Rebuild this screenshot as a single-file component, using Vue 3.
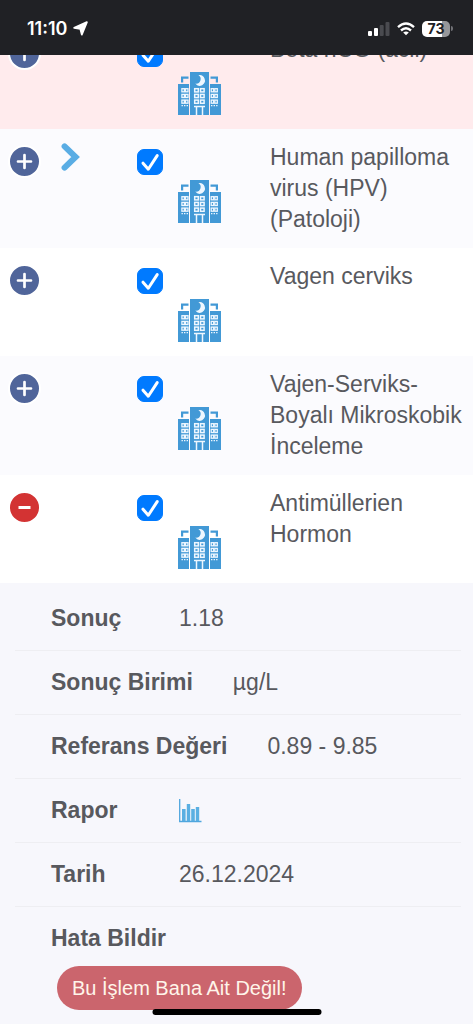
<script setup>
import { ref } from 'vue'

const tests = ref([
  { name: 'Beta hCG (acil)', tone: 'alert', open: false, arrow: false, picked: true },
  { name: 'Human papilloma virus (HPV) (Patoloji)', tone: 'tint', open: false, arrow: true, picked: true },
  { name: 'Vagen cerviks', tone: 'plain', open: false, arrow: false, picked: true },
  { name: 'Vajen-Serviks-Boyalı Mikroskobik İnceleme', tone: 'tint', open: false, arrow: false, picked: true },
  {
    name: 'Antimüllerien Hormon', tone: 'plain', open: true, arrow: false, picked: true,
    details: [
      { label: 'Sonuç', value: '1.18' },
      { label: 'Sonuç Birimi', value: 'µg/L' },
      { label: 'Referans Değeri', value: '0.89 - 9.85' },
      { label: 'Rapor', kind: 'report' },
      { label: 'Tarih', value: '26.12.2024' },
      { label: 'Hata Bildir', kind: 'dispute' },
    ],
  },
])

const centerWindows = [16, 21.7, 27.4].flatMap(y => [16, 21.8].map(x => ({ x, y })))
const sideWindows = [16, 21.7, 27.4].flatMap(y => [3.3, 6.9, 32.6, 36.2].map(x => ({ x, y })))
</script>

<template>
  <div class="page">
    <header class="status">
      <div class="clock">
        <span>11:10</span>
        <svg width="15" height="15" viewBox="0 0 15 15" aria-hidden="true">
          <path d="M13.9 1.1 8.8 13.6 7.3 7.8 1.2 6.9Z" fill="#fff" stroke="#fff" stroke-width="1.8" stroke-linejoin="round" />
        </svg>
      </div>
      <div class="signals">
        <svg width="22" height="14" viewBox="0 0 22 14" aria-hidden="true">
          <rect x="0" y="9" width="4" height="5" rx="1" fill="#fff" />
          <rect x="6" y="6" width="4" height="8" rx="1" fill="#fff" />
          <rect x="11.7" y="3" width="4" height="11" rx="1" fill="#4a4b50" />
          <rect x="17.5" y="0" width="4" height="14" rx="1" fill="#4a4b50" />
        </svg>
        <svg width="18" height="14" viewBox="0 0 18 14" aria-hidden="true">
          <g fill="none" stroke="#fff" stroke-width="2.4">
            <path d="M1 5.2Q9-2 17 5.2" />
            <path d="M4 8.5Q9 4 14 8.5" />
          </g>
          <path d="M9 13.2 6.2 10.5Q9 8.3 11.8 10.5Z" fill="#fff" />
        </svg>
        <div class="battery"><span class="level">73</span><span class="cap"></span></div>
      </div>
    </header>

    <main>
      <table class="tests">
        <colgroup>
          <col class="c-toggle" /><col class="c-arrow" /><col class="c-pick" /><col />
        </colgroup>
        <tbody>
          <template v-for="(test, i) in tests" :key="test.name">
            <tr :class="test.tone">
              <td class="toggle-cell">
                <button
                  type="button"
                  :class="['toggle', { open: test.open }]"
                  :aria-expanded="test.open"
                  :aria-label="test.name"
                  @click="test.open = !test.open"
                >
                  <svg width="29" height="29" viewBox="0 0 29 29" aria-hidden="true">
                    <path v-if="test.open" d="M8.5 14.5h12" stroke="#fff" stroke-width="3" />
                    <path v-else d="M8 14.5h13M14.5 8v13" stroke="#fff" stroke-width="2.7" stroke-linecap="round" />
                  </svg>
                </button>
              </td>
              <td class="arrow-cell">
                <svg v-if="test.arrow" width="21" height="30" viewBox="0 0 21 30" aria-hidden="true">
                  <path d="M4.6 4.4 15.6 15 4.6 25.6" fill="none" stroke="#5aade4" stroke-width="6" stroke-linejoin="miter" stroke-linecap="round" />
                </svg>
              </td>
              <td class="pick-cell">
                <div class="pick">
                  <span class="tick">
                    <input :id="`test-${i}`" v-model="test.picked" type="checkbox" />
                    <svg v-if="test.picked" width="26" height="26" viewBox="0 0 26 26" aria-hidden="true">
                      <path d="M6 14.2 11.3 20.2 20.2 6.6" fill="none" stroke="#fff" stroke-width="3" stroke-linecap="round" stroke-linejoin="round" />
                    </svg>
                  </span>
                  <svg class="hospital" width="43" height="43" viewBox="0 0 43 43" aria-hidden="true">
                    <g fill="#4299d6">
                      <path d="M0 12H11V43H0ZM12 0H31V43H12ZM32 12H43V43H32Z" />
                      <path d="M3 4.5H10.5V6.8H5.2V10.5H3ZM40 4.5H32.5V6.8H37.8V10.5H40Z" />
                    </g>
                    <path d="M20.4 3.3A5.3 5.3 0 1 1 17.3 11.6A4.5 4.5 0 0 0 20.4 3.3Z" fill="#eef7ff" />
                    <g fill="#4299d6" stroke="#eef7ff" stroke-width="1.5">
                      <rect v-for="w in centerWindows" :key="`c${w.x}-${w.y}`" :x="w.x + 0.7" :y="w.y + 0.7" width="3.6" height="3.2" />
                    </g>
                    <g fill="#4299d6" stroke="#eef7ff" stroke-width="1.3">
                      <rect v-for="w in sideWindows" :key="`s${w.x}-${w.y}`" :x="w.x + 0.6" :y="w.y + 0.7" width="2.5" height="3.1" />
                    </g>
                    <path d="M3.5 33h1.4v1.2H3.5zM6 33h1.4v1.2H6zM8.6 33H10v1.2H8.6zM33 33h1.4v1.2H33zM35.6 33H37v1.2H35.6zM38.1 33h1.4v1.2H38.1z" fill="#eef7ff" />
                    <path d="M16 34.4H27M18.5 34.4V43M24.5 34.4V43" fill="none" stroke="#eef7ff" stroke-width="1.5" />
                  </svg>
                </div>
              </td>
              <td class="name-cell"><label :for="`test-${i}`">{{ test.name }}</label></td>
            </tr>
            <tr v-if="test.open && test.details" class="detail-row">
              <td colspan="4">
                <dl class="details">
                  <div v-for="item in test.details" :key="item.label" class="item">
                    <dt>{{ item.label }}</dt>
                    <dd v-if="item.kind === 'report'">
                      <button type="button" class="report" aria-label="Rapor">
                        <svg width="23" height="24" viewBox="0 0 23 24" aria-hidden="true">
                          <path d="M.7 0V22.5H22.5" fill="none" stroke="#4fa6de" stroke-width="1.3" />
                          <path d="M3 10H6.6V22H3ZM7.8 5H11.2V22H7.8ZM12.2 10H15.8V22H12.2ZM16.8 8H20.2V22H16.8Z" fill="#5aafe2" />
                        </svg>
                      </button>
                    </dd>
                    <dd v-else-if="item.kind === 'dispute'">
                      <button type="button" class="dispute">Bu İşlem Bana Ait Değil!</button>
                    </dd>
                    <dd v-else>{{ item.value }}</dd>
                  </div>
                </dl>
              </td>
            </tr>
          </template>
        </tbody>
      </table>
    </main>
    <div class="home-bar"></div>
  </div>
</template>

<style>
body {
  background: #f7f7fc;
}
</style>

<style scoped>
.page {
  min-height: 100vh;
  overflow: clip;
  color: #58595e;
  font: 23px/31px "Liberation Sans", Arial, sans-serif;
}
.status {
  position: sticky;
  top: 0;
  z-index: 2;
  display: flex;
  align-items: center;
  justify-content: space-between;
  box-sizing: border-box;
  height: 55px;
  padding: 2px 20px 0 27px;
  background: #202125;
  color: #fff;
  font-family: Inter, sans-serif;
}
.clock {
  display: flex;
  align-items: center;
  gap: 6px;
  font-size: 18px;
  font-weight: 600;
}
.signals {
  display: flex;
  align-items: center;
  gap: 7px;
}
.battery {
  display: flex;
  align-items: center;
  gap: 1px;
}
.level {
  width: 28px;
  border-radius: 5px;
  background: linear-gradient(90deg, #fff 73%, #96979a 73%);
  color: #202125;
  font-size: 14px;
  font-weight: 700;
  line-height: 16px;
  text-align: center;
}
.cap {
  width: 2px;
  height: 5px;
  border-radius: 0 2px 2px 0;
  background: #707176;
}
main {
  margin-top: -34px;
}
.tests {
  width: 100%;
  border-collapse: collapse;
  table-layout: fixed;
}
.c-toggle {
  width: 55px;
}
.c-arrow {
  width: 82px;
}
.c-pick {
  width: 133px;
}
td {
  padding: 0;
  vertical-align: top;
}
.alert {
  background: #ffebed;
}
.tint {
  background: #fbfbfe;
}
.plain {
  background: #fff;
}
.toggle-cell {
  padding: 16px 0 0 8px;
}
.toggle {
  display: block;
  padding: 0;
  border: 2px solid #fff;
  border-radius: 50%;
  background: #50659a;
}
.toggle.open {
  background: #d33333;
}
.toggle svg,
.arrow-cell svg,
.hospital,
.report svg {
  display: block;
}
.arrow-cell {
  padding: 13px 0 0 5px;
}
.pick {
  display: flex;
  align-items: flex-start;
  gap: 15px;
  padding: 20px 0 14px;
}
.tick {
  display: grid;
}
.tick > * {
  grid-area: 1 / 1;
}
.tick svg {
  pointer-events: none;
}
.tick input {
  appearance: none;
  width: 26px;
  height: 26px;
  margin: 0;
  border: 1px solid #b8b8be;
  border-radius: 7px;
  background: #fff;
}
.tick input:checked {
  border-color: #007aff;
  background: #007aff;
}
.hospital {
  margin-top: 31px;
}
.name-cell {
  padding: 13px 8px 13px 0;
}
.detail-row {
  background: #f7f7fc;
}
.details {
  margin: 0;
  padding: 4px 12px 14px 15px;
}
.item {
  display: flex;
  flex-wrap: wrap;
  column-gap: 40px;
  row-gap: 12px;
  padding: 16px 36px;
  border-bottom: 1px solid #eeeef2;
}
.item:last-child {
  border-bottom: 0;
  padding-bottom: 0;
}
dt {
  min-width: 88px;
  font-weight: 700;
}
dd {
  margin: 0;
}
.report {
  display: block;
  padding: 4px 0 0;
  border: 0;
  background: none;
}
.dispute {
  height: 44px;
  margin-left: 6px;
  padding: 0 15px;
  border: 0;
  border-radius: 22px;
  background: #cb656d;
  color: #fff5ea;
  font: 20px/24px "Liberation Sans", Arial, sans-serif;
}
.home-bar {
  position: fixed;
  bottom: 9px;
  left: 50%;
  z-index: 3;
  width: 169px;
  height: 6px;
  border-radius: 3px;
  background: #000;
  transform: translateX(-50%);
}
</style>
